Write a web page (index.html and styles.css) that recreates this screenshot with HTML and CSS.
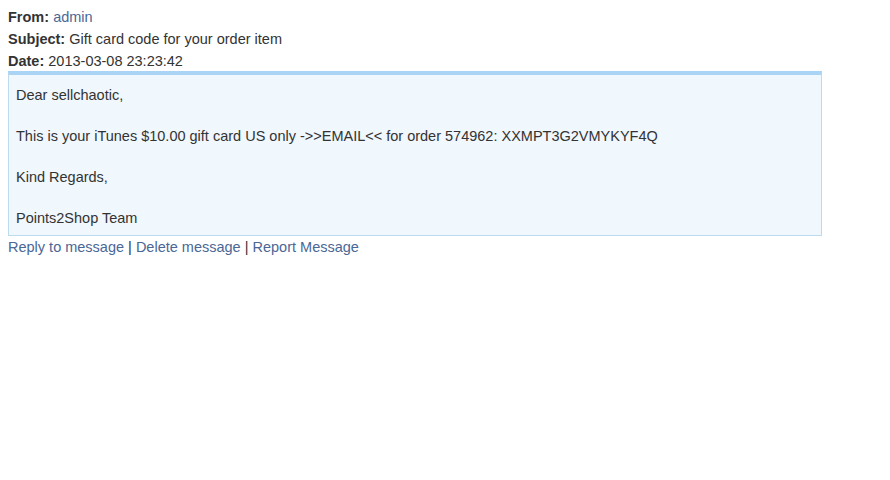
FILE: index.html
```html
<!DOCTYPE html>
<html lang="en">
<head>
    <meta charset="UTF-8">
    <title>Message</title>
    <link rel="stylesheet" href="styles.css">
</head>
<body>
    <div class="message">
        <div class="meta"><b>From:</b> <a href="#">admin</a></div>
        <div class="meta"><b>Subject:</b> Gift card code for your order item</div>
        <div class="meta"><b>Date:</b> 2013-03-08 23:23:42</div>
        <div class="message-body">
            Dear sellchaotic,<br><br>
            This is your iTunes $10.00 gift card US only -&gt;&gt;EMAIL&lt;&lt; for order 574962: XXMPT3G2VMYKYF4Q<br><br>
            Kind Regards,<br><br>
            Points2Shop Team
        </div>
        <div class="actions">
            <a href="#">Reply to message</a> | <a href="#">Delete message</a> | <a href="#">Report Message</a>
        </div>
    </div>
</body>
</html>
```

FILE: styles.css
```css
body {
    margin: 0;
    padding: 6px 8px;
    font-family: "Liberation Sans", Arial, sans-serif;
    font-size: 14.5px;
    color: #333;
    background: #fff;
}

a {
    color: #4a6796;
    text-decoration: none;
}

.meta {
    line-height: 22px;
}

.meta b {
    color: #333;
}

.message-body {
    width: 798px;
    margin-top: -1px;
    padding: 10px 7px 6px 7px;
    background: #f0f7fd;
    border: 1px solid #bcdaf0;
    border-top: 4px solid #a9d4f5;
    line-height: 20.5px;
}

.actions {
    line-height: 22px;
}
```
